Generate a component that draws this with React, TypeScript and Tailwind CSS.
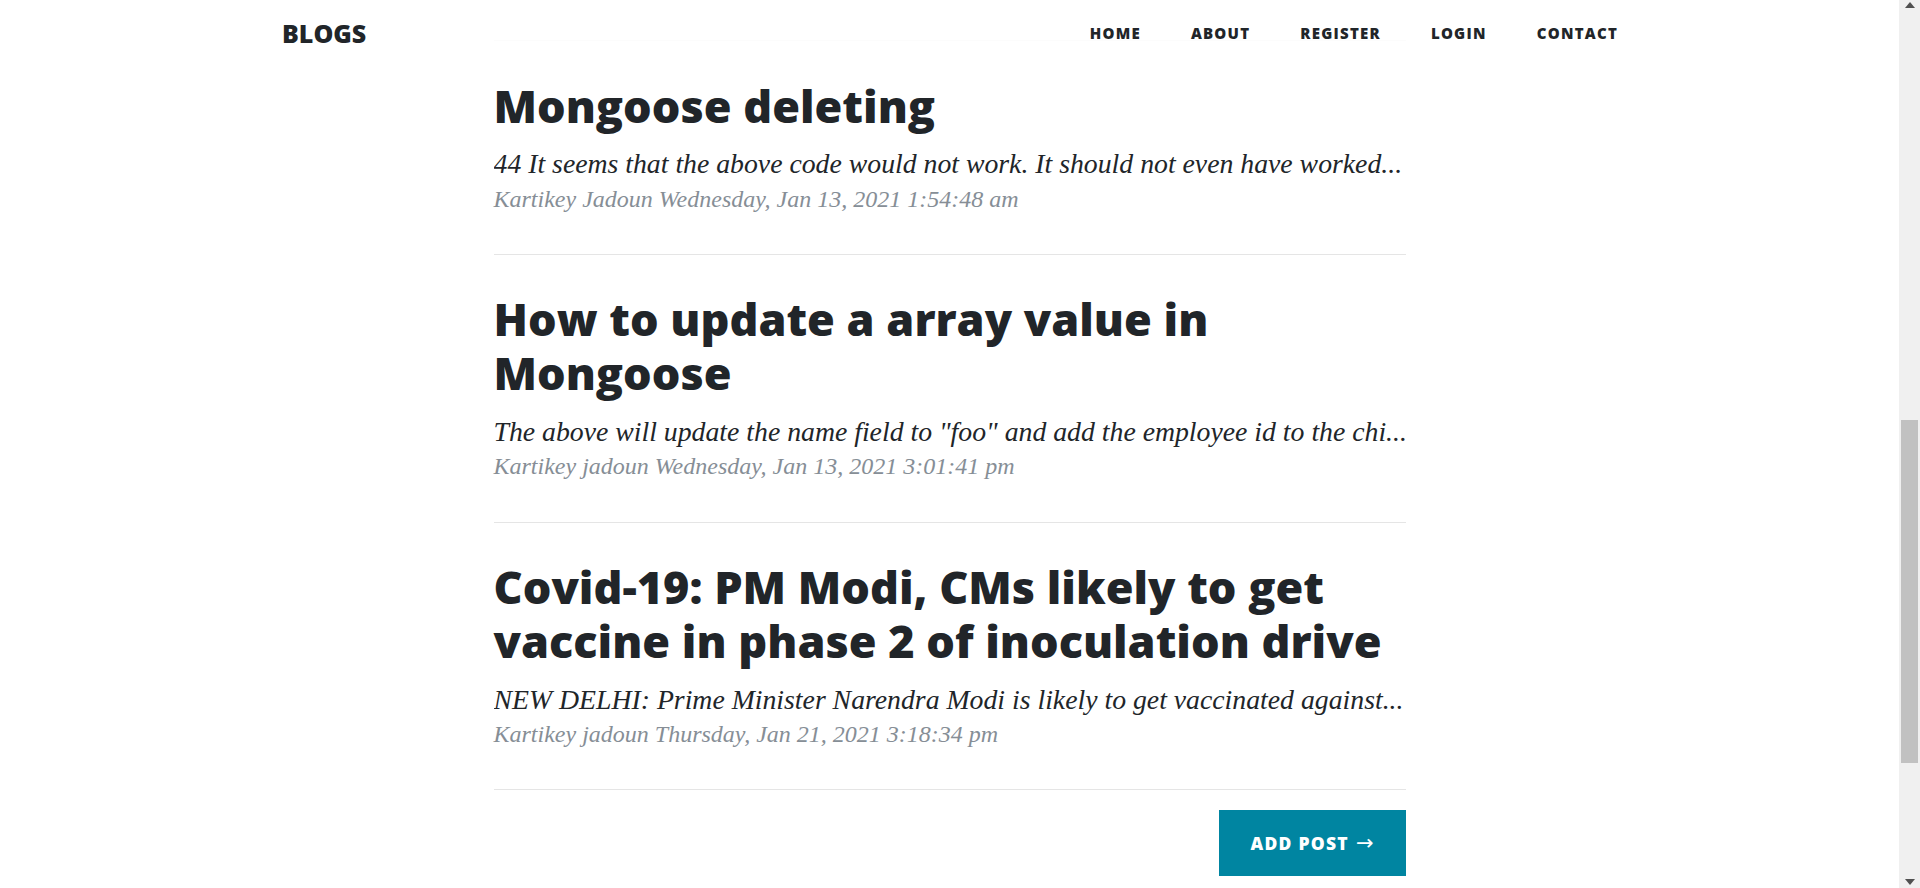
import React from 'react';

type Post = {
  title: string;
  excerpt: string;
  author: string;
  date: string;
};

const posts: Post[] = [
  {
    title: 'Mongoose deleting',
    excerpt: '44 It seems that the above code would not work. It should not even have worked...',
    author: 'Kartikey Jadoun',
    date: 'Wednesday, Jan 13, 2021 1:54:48 am',
  },
  {
    title: 'How to update a array value in Mongoose',
    excerpt: 'The above will update the name field to "foo" and add the employee id to the chi...',
    author: 'Kartikey jadoun',
    date: 'Wednesday, Jan 13, 2021 3:01:41 pm',
  },
  {
    title: 'Covid-19: PM Modi, CMs likely to get vaccine in phase 2 of inoculation drive',
    excerpt: 'NEW DELHI: Prime Minister Narendra Modi is likely to get vaccinated against...',
    author: 'Kartikey jadoun',
    date: 'Thursday, Jan 21, 2021 3:18:34 pm',
  },
];

const navLinks = ['Home', 'About', 'Register', 'Login', 'Contact'];

const sans = "font-['Open_Sans','Noto_Sans',sans-serif]";
const serif = "font-['Liberation_Serif','DejaVu_Serif',serif]";

export default function App() {
  return (
    <div className="flex h-[888px] w-full overflow-hidden bg-white text-[#212529]">
      <div className="relative flex-1">
        {/* Fixed navbar (scrolled state) */}
        <header className={`absolute inset-x-0 top-0 z-10 flex h-[66px] items-center bg-white/90 ${sans}`}>
          <a className="ml-[282px] text-[25px] font-extrabold leading-none text-[#212529]">BLOGS</a>
          <nav className="ml-auto mr-[281px] flex items-center gap-[50px]">
            {navLinks.map((l) => (
              <a
                key={l}
                className="text-[15px] font-extrabold uppercase leading-none tracking-[1.25px] text-[#212529]"
              >
                {l}
              </a>
            ))}
          </nav>
        </header>

        <main className="mx-auto w-[912px] pt-[40px]">
          <hr className="border-t border-[#e5e5e5]" />
          {posts.map((post) => (
            <React.Fragment key={post.date}>
              <div>
                <a>
                  <h2 className={`mt-[37.5px] mb-[12.5px] text-[45px] font-extrabold leading-[54px] ${sans}`}>
                    {post.title}
                  </h2>
                  <p className={`overflow-hidden whitespace-nowrap text-[27.75px] italic leading-[37.5px] ${serif}`}>
                    {post.excerpt}
                  </p>
                </a>
                <p className={`text-[24px] italic leading-[33.75px] text-[#868e96] ${serif}`}>
                  {post.author} {post.date}
                </p>
              </div>
              <hr className="mt-[37.5px] border-t border-[#e5e5e5]" />
            </React.Fragment>
          ))}

          <div className="mt-[20px] flex justify-end">
            <a
              className={`flex h-[66px] items-center gap-[7px] bg-[#0085a1] px-[32px] text-[17.5px] font-extrabold uppercase tracking-[1.25px] text-white ${sans}`}
            >
              Add Post
              <span className="font-['DejaVu_Sans',sans-serif] text-[21px] font-normal leading-none tracking-normal">
                &rarr;
              </span>
            </a>
          </div>
        </main>
      </div>

      {/* Browser scrollbar */}
      <div className="flex w-[21px] flex-col bg-[#f0f0f0]">
        <div className="flex h-[21px] justify-center pt-[2px]">
          <svg width="10" height="6" viewBox="0 0 10 6">
            <path d="M5 0 L10 6 L0 6 Z" fill="#505050" />
          </svg>
        </div>
        <div className="mt-[399px] mx-[2px] h-[343px] bg-[#c1c1c1]" />
        <div className="mt-auto flex h-[21px] items-end justify-center pb-[3px]">
          <svg width="10" height="6" viewBox="0 0 10 6">
            <path d="M0 0 L10 0 L5 6 Z" fill="#505050" />
          </svg>
        </div>
      </div>
    </div>
  );
}
